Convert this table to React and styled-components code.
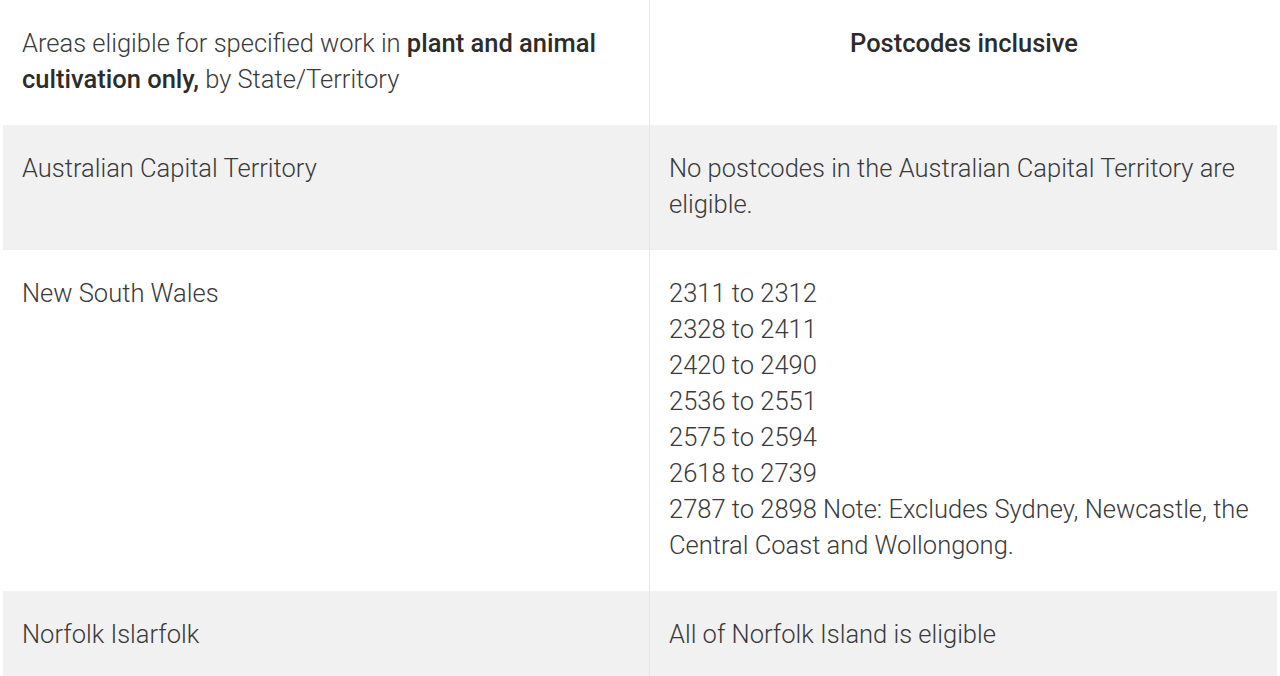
import styled, { createGlobalStyle } from "styled-components";

const GlobalStyle = createGlobalStyle`
  body {
    margin: 0;
    background: #ffffff;
    font-family: Roboto, "Liberation Sans", sans-serif;
    color: #3a3a3a;
  }
`;

const rows = [
  {
    area: "Australian Capital Territory",
    codes: ["No postcodes in the Australian Capital Territory are eligible."],
  },
  {
    area: "New South Wales",
    codes: [
      "2311 to 2312",
      "2328 to 2411",
      "2420 to 2490",
      "2536 to 2551",
      "2575 to 2594",
      "2618 to 2739",
      "2787 to 2898 Note: Excludes Sydney, Newcastle, the Central Coast and Wollongong.",
    ],
  },
  {
    area: "Norfolk Islarfolk",
    codes: ["All of Norfolk Island is eligible"],
  },
];

const App = () => {
  return (
    <>
      <GlobalStyle />
      <Table>
        <Row>
          <Cell>
            Areas eligible for specified work in{" "}
            <b>plant and animal cultivation only,</b> by State/Territory
          </Cell>
          <HeadCell>Postcodes inclusive</HeadCell>
        </Row>
        {rows.map((r, i) => (
          <Row key={r.area} $shaded={i % 2 === 0}>
            <Cell>{r.area}</Cell>
            <Cell>
              {r.codes.map((c) => (
                <Line key={c}>{c}</Line>
              ))}
            </Cell>
          </Row>
        ))}
      </Table>
    </>
  );
};
export default App;

const Table = styled.div`
  display: flex;
  flex-direction: column;
  width: 1274px;
  margin: 0 3px;
  height: 676px;
  overflow: hidden;
`;
const Row = styled.div`
  display: grid;
  grid-template-columns: 646px 1fr;
  background-color: ${(p) => (p.$shaded ? "#f1f1f1" : "#ffffff")};
  flex-shrink: 0;
`;
const Cell = styled.div`
  padding: 25px 18px 28px 19px;
  font-size: 25.5px;
  font-weight: 300;
  line-height: 36px;
  & + & {
    border-left: 1px solid #e8e8e8;
  }
  b {
    font-weight: 500;
    color: #2c2c2c;
  }
`;
const HeadCell = styled(Cell)`
  text-align: center;
  font-weight: 500;
  color: #2c2c2c;
`;
const Line = styled.div``;
